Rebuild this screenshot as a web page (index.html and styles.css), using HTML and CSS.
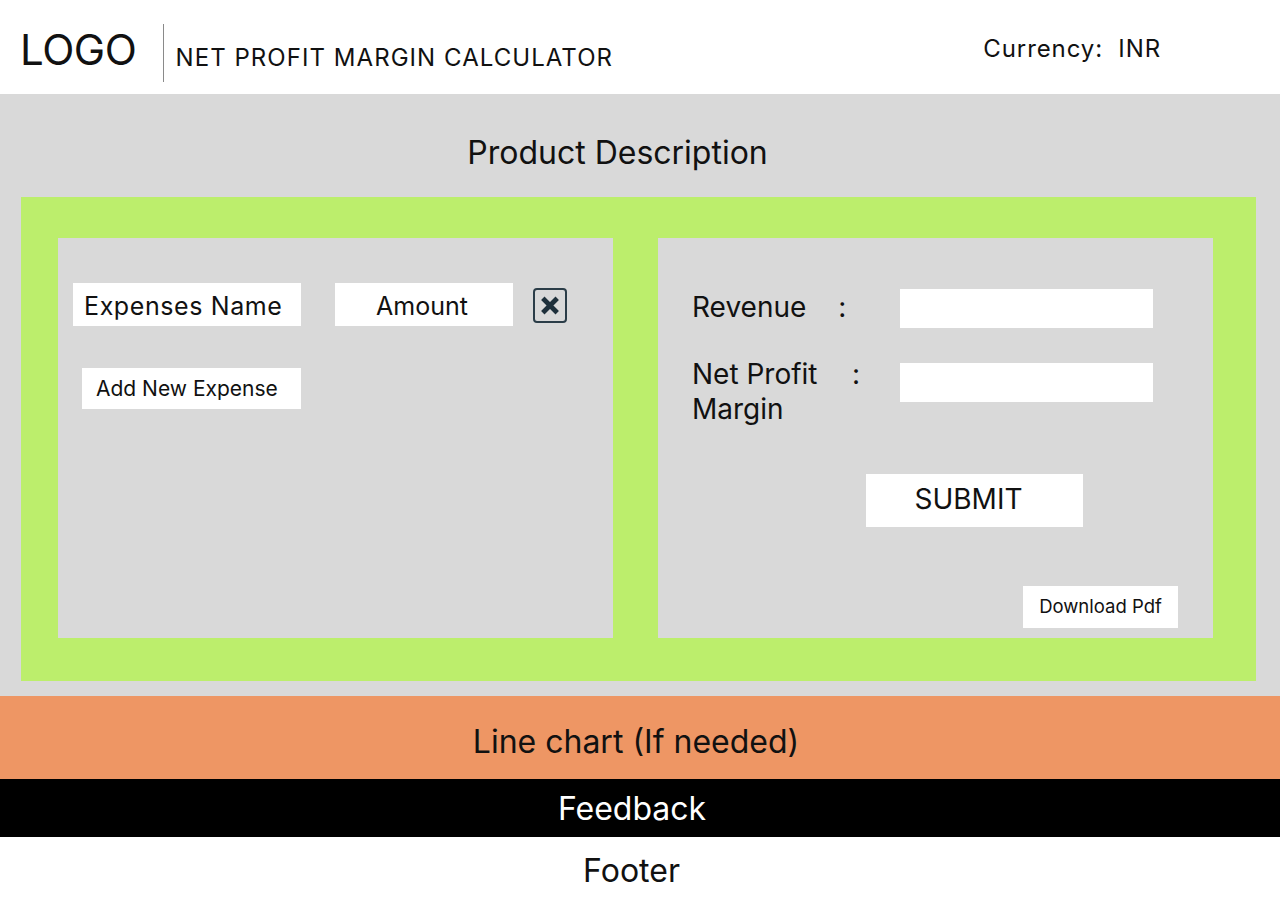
FILE: index.html
```html
<!DOCTYPE html>
<html lang="en">
<head>
<meta charset="utf-8">
<title>Net Profit Margin Calculator</title>
<link rel="stylesheet" href="styles.css">
</head>
<body>
<header class="topbar">
  <div class="logo">LOGO</div>
  <div class="divider"></div>
  <div class="app-title">NET PROFIT MARGIN CALCULATOR</div>
  <div class="currency">Currency:&nbsp; INR</div>
</header>

<main class="content">
  <h1 class="section-title">Product Description</h1>
  <div class="green-frame">
    <section class="panel expenses">
      <div class="expense-row">
        <div class="field field-name">Expenses Name</div>
        <div class="field field-amount">Amount</div>
        <button class="remove-btn" aria-label="Remove">
          <svg width="34" height="35" viewBox="0 0 34 35">
            <rect x="1" y="1" width="32" height="33" rx="3" fill="none" stroke="#2b3d48" stroke-width="2"/>
            <path d="M11.5 12 L22.5 23 M22.5 12 L11.5 23" stroke="#1e303b" stroke-width="4.8" stroke-linecap="square" fill="none"/>
          </svg>
        </button>
      </div>
      <button class="add-btn">Add New Expense</button>
    </section>

    <section class="panel results">
      <div class="result-row row-revenue">
        <div class="label-wrap"><span class="label">Revenue</span><span class="colon">:</span></div>
        <div class="result-input"></div>
      </div>
      <div class="result-row row-margin">
        <div class="label-wrap"><span class="label label-wrapped">Net Profit Margin</span><span class="colon">:</span></div>
        <div class="result-input"></div>
      </div>
      <div class="submit-wrap"><button class="submit-btn">SUBMIT</button></div>
      <div class="download-wrap"><button class="download-btn">Download Pdf</button></div>
    </section>
  </div>
</main>

<section class="chart-bar">Line chart (If needed)</section>
<section class="feedback-bar">Feedback</section>
<footer class="footer">Footer</footer>
</body>
</html>
```

FILE: styles.css
```css
* { box-sizing: border-box; }

body {
  margin: 0;
  font-family: Inter, "Noto Sans", "Liberation Sans", sans-serif;
  color: #111;
  background: #fff;
}

button {
  font-family: inherit;
  border: 0;
  padding: 0;
  background: none;
  color: inherit;
  cursor: pointer;
}

/* Header */
.topbar {
  height: 94px;
  display: flex;
  align-items: center;
  padding-left: 20px;
  background: #fff;
}
.logo {
  font-size: 42px;
  font-weight: 400;
  letter-spacing: -0.4px;
  margin-top: 4px;
}
.divider {
  width: 1px;
  height: 58px;
  background: #8a8a8a;
  margin-left: 26px;
  margin-right: 12px;
  margin-top: 12px;
}
.app-title {
  font-size: 24px;
  margin-top: 20px;
  letter-spacing: 1.05px;
}
.currency {
  margin-left: auto;
  margin-right: 119px;
  font-size: 24px;
  letter-spacing: 0.9px;
  margin-top: 2px;
}

/* Main grey area */
.content {
  background: #d9d9d9;
  padding: 0 24px 15px 21px;
}
.section-title {
  margin: 0;
  height: 103px;
  display: flex;
  align-items: center;
  justify-content: center;
  font-size: 32px;
  font-weight: 400;
  padding-right: 42px;
  padding-top: 13px;
}
.green-frame {
  background: #bcee6c;
  height: 484px;
  padding: 41px 43px 43px 37px;
  display: grid;
  grid-template-columns: 555px 555px;
  column-gap: 45px;
}
.panel {
  background: #d9d9d9;
}

/* Left panel */
.expenses {
  padding: 45px 15px 0;
}
.expense-row {
  display: flex;
  align-items: flex-start;
}
.field {
  background: #fff;
  height: 43px;
  display: flex;
  align-items: center;
  font-size: 25px;
  padding-top: 3px;
}
.field-name {
  width: 228px;
  padding-left: 11px;
  letter-spacing: 0.6px;
}
.field-amount {
  width: 178px;
  margin-left: 34px;
  justify-content: center;
  padding-right: 4px;
}
.remove-btn {
  margin-left: 20px;
  margin-top: 5px;
  width: 34px;
  height: 35px;
  display: block;
}
.remove-btn svg { display: block; }
.add-btn {
  margin: 42px 0 0 9px;
  width: 219px;
  height: 41px;
  background: #fff;
  font-size: 21px;
  display: flex;
  align-items: center;
  justify-content: flex-start;
  padding-left: 14px;
}

/* Right panel */
.results {
  padding: 51px 60px 10px 34px;
  display: flex;
  flex-direction: column;
}
.result-row {
  display: grid;
  grid-template-columns: 208px 253px;
  font-size: 28px;
}
.row-revenue {
  align-items: center;
  height: 39px;
}
.row-revenue .label-wrap { margin-top: -4px; }
.row-margin {
  margin-top: 29px;
  align-items: start;
  line-height: 35px;
}
.label-wrap {
  display: flex;
  align-items: flex-start;
}
.label-wrapped {
  width: 135px;
}
.colon {
  margin-left: 32px;
}
.row-margin .colon { margin-left: 25px; }
.result-input {
  background: #fff;
  height: 39px;
}
.row-margin .result-input { margin-top: 6px; }

.submit-wrap {
  margin-top: 47px;
  padding-left: 174px;
}
.submit-btn {
  width: 217px;
  height: 53px;
  background: #fff;
  font-size: 28px;
  display: flex;
  align-items: center;
  justify-content: center;
  padding-right: 12px;
  padding-bottom: 3px;
}
.download-wrap {
  margin-top: auto;
  display: flex;
  justify-content: flex-end;
  margin-right: -25px;
}
.download-btn {
  width: 155px;
  height: 42px;
  background: #fff;
  font-size: 18.5px;
  display: flex;
  align-items: center;
  justify-content: center;
  padding-bottom: 2px;
}

/* Bottom bars */
.chart-bar {
  height: 83px;
  background: #ee9664;
  display: flex;
  align-items: center;
  justify-content: center;
  font-size: 32px;
  padding-top: 8px;
  padding-right: 8px;
}
.feedback-bar {
  height: 58px;
  background: #000;
  color: #fff;
  display: flex;
  align-items: center;
  justify-content: center;
  font-size: 32px;
  padding-right: 16px;
}
.footer {
  height: 73px;
  background: #fff;
  display: flex;
  align-items: center;
  justify-content: center;
  font-size: 32px;
  padding-bottom: 6px;
  padding-right: 17px;
}
```
